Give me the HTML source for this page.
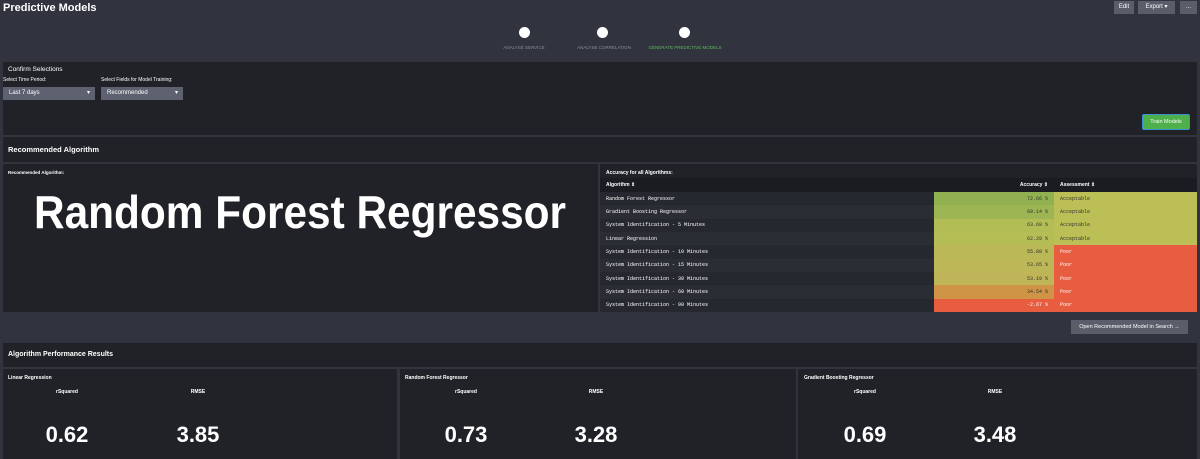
<!DOCTYPE html>
<html><head><meta charset="utf-8"><style>
*{margin:0;padding:0;box-sizing:border-box}
body{width:1200px;height:454px;background:#31343e;font-family:"Liberation Sans",sans-serif;color:#fff;position:relative;overflow:hidden}
.a{position:absolute}
.p{position:absolute;background:#212227}
.b{font-weight:bold}
.btn{position:absolute;background:#5a5e6a;color:#fff;font-size:6px;text-align:center;line-height:13px}
.circ{position:absolute;width:11px;height:11px;border-radius:50%;background:#fff}
.st{position:absolute;font-size:4.5px;color:#8a8e98;width:100px;text-align:center}
.dd{position:absolute;background:#5e6270;font-size:6px;line-height:13px;padding-left:6px;color:#fff}
.dd:after{content:"▾";position:absolute;right:5px;font-size:6px}
table{border-collapse:collapse;font-size:5px}
td{height:13.33px;font-family:"Liberation Mono",monospace;padding:0 6px}
.r1{background:#262830}.r2{background:#2b2d35}
.num{text-align:right;color:#333}
.ok{color:#333}.poor{color:#fff}
</style></head><body>
<div class="a b" style="left:3px;top:2px;font-size:11px">Predictive Models</div>
<div class="btn" style="left:1114px;top:1px;width:20px">Edit</div>
<div class="btn" style="left:1138px;top:1px;width:37px">Export ▾</div>
<div class="btn" style="left:1180px;top:1px;width:17px">...</div>

<div class="circ" style="left:519px;top:27px"></div>
<div class="circ" style="left:597px;top:27px"></div>
<div class="circ" style="left:679px;top:27px"></div>
<div class="st" style="left:474px;top:45px">ANALYSE SERVICE</div>
<div class="st" style="left:554px;top:45px">ANALYSE CORRELATION</div>
<div class="st" style="left:635px;top:45px;color:#5cb85c">GENERATE PREDICTIVE MODELS</div>

<div class="p" style="left:3px;top:62px;width:1194px;height:73px"></div>
<div class="a" style="left:8px;top:66px;font-size:6.5px">Confirm Selections</div>
<div class="a" style="left:3px;top:77px;font-size:5px">Select Time Period:</div>
<div class="a" style="left:101px;top:77px;font-size:5px">Select Fields for Model Training:</div>
<div class="dd" style="left:3px;top:87px;width:92px;height:13px">Last 7 days</div>
<div class="dd" style="left:101px;top:87px;width:82px;height:13px">Recommended</div>
<div class="a" style="left:1142px;top:114px;width:48px;height:16px;background:#4db04a;border:1px solid #3a8fd0;border-radius:2px;font-size:5.5px;text-align:center;line-height:14px">Train Models</div>

<div class="p" style="left:3px;top:137px;width:1194px;height:25px"></div>
<div class="a b" style="left:8px;top:145px;font-size:7.5px">Recommended Algorithm</div>

<div class="p" style="left:3px;top:164px;width:595px;height:148px"></div>
<div class="a b" style="left:8px;top:170px;font-size:4.5px">Recommended Algorithm:</div>
<svg class="a" style="left:0;top:180px" width="600" height="60"><text x="34" y="48" font-family="Liberation Sans" font-weight="bold" font-size="46" fill="#fff" textLength="532" lengthAdjust="spacingAndGlyphs">Random Forest Regressor</text></svg>

<div class="p" style="left:600px;top:164px;width:597px;height:148px"></div>
<div class="a b" style="left:606px;top:170px;font-size:5px">Accuracy for all Algorithms:</div>
<table class="a" style="left:600px;top:178px;width:597px">
<tr style="background:#1a1c22;font-weight:bold"><td style="width:334px;height:14px;font-family:'Liberation Sans'">Algorithm ⇕</td><td style="width:120px;text-align:right;font-family:'Liberation Sans'">Accuracy ⇕</td><td style="font-family:'Liberation Sans'">Assessment ⇕</td></tr>
<tr class="r1"><td>Random Forest Regressor</td><td class="num" style="background:#91b04f">72.66 %</td><td class="ok" style="background:#bcbf55">Acceptable</td></tr>
<tr class="r2"><td>Gradient Boosting Regressor</td><td class="num" style="background:#9db552">69.14 %</td><td class="ok" style="background:#bcbf55">Acceptable</td></tr>
<tr class="r1"><td>System Identification - 5 Minutes</td><td class="num" style="background:#b2bd55">63.69 %</td><td class="ok" style="background:#bcbf55">Acceptable</td></tr>
<tr class="r2"><td>Linear Regression</td><td class="num" style="background:#b5bd55">62.29 %</td><td class="ok" style="background:#bcbf55">Acceptable</td></tr>
<tr class="r1"><td>System Identification - 10 Minutes</td><td class="num" style="background:#bbb957">55.88 %</td><td class="poor" style="background:#e85c3f">Poor</td></tr>
<tr class="r2"><td>System Identification - 15 Minutes</td><td class="num" style="background:#bdb757">53.65 %</td><td class="poor" style="background:#e85c3f">Poor</td></tr>
<tr class="r1"><td>System Identification - 30 Minutes</td><td class="num" style="background:#c0b458">53.19 %</td><td class="poor" style="background:#e85c3f">Poor</td></tr>
<tr class="r2"><td>System Identification - 60 Minutes</td><td class="num" style="background:#d09447">34.54 %</td><td class="poor" style="background:#e85c3f">Poor</td></tr>
<tr class="r1"><td>System Identification - 90 Minutes</td><td class="num" style="background:#e85c3f;color:#fff">-2.67 %</td><td class="poor" style="background:#e85c3f">Poor</td></tr>
</table>

<div class="btn" style="left:1071px;top:320px;width:117px;height:14px;font-size:5.5px;line-height:14px">Open Recommended Model in Search →</div>

<div class="p" style="left:3px;top:343px;width:1194px;height:24px"></div>
<div class="a b" style="left:8px;top:351px;font-size:7px">Algorithm Performance Results</div>

<div class="p" style="left:3px;top:369px;width:394px;height:90px"></div>
<div class="p" style="left:400px;top:369px;width:396px;height:90px"></div>
<div class="p" style="left:798px;top:369px;width:399px;height:90px"></div>

<div class="a b" style="left:8px;top:375px;font-size:5px">Linear Regression</div>
<div class="a b" style="left:405px;top:375px;font-size:5px">Random Forest Regressor</div>
<div class="a b" style="left:804px;top:375px;font-size:5px">Gradient Boosting Regressor</div>

<div class="a b" style="left:47px;top:389px;width:40px;text-align:center;font-size:5px">rSquared</div>
<div class="a b" style="left:178px;top:389px;width:40px;text-align:center;font-size:5px">RMSE</div>
<div class="a b" style="left:446px;top:389px;width:40px;text-align:center;font-size:5px">rSquared</div>
<div class="a b" style="left:576px;top:389px;width:40px;text-align:center;font-size:5px">RMSE</div>
<div class="a b" style="left:845px;top:389px;width:40px;text-align:center;font-size:5px">rSquared</div>
<div class="a b" style="left:975px;top:389px;width:40px;text-align:center;font-size:5px">RMSE</div>

<div class="a b" style="left:27px;top:422px;width:80px;text-align:center;font-size:22px">0.62</div>
<div class="a b" style="left:158px;top:422px;width:80px;text-align:center;font-size:22px">3.85</div>
<div class="a b" style="left:426px;top:422px;width:80px;text-align:center;font-size:22px">0.73</div>
<div class="a b" style="left:556px;top:422px;width:80px;text-align:center;font-size:22px">3.28</div>
<div class="a b" style="left:825px;top:422px;width:80px;text-align:center;font-size:22px">0.69</div>
<div class="a b" style="left:955px;top:422px;width:80px;text-align:center;font-size:22px">3.48</div>
</body></html>
